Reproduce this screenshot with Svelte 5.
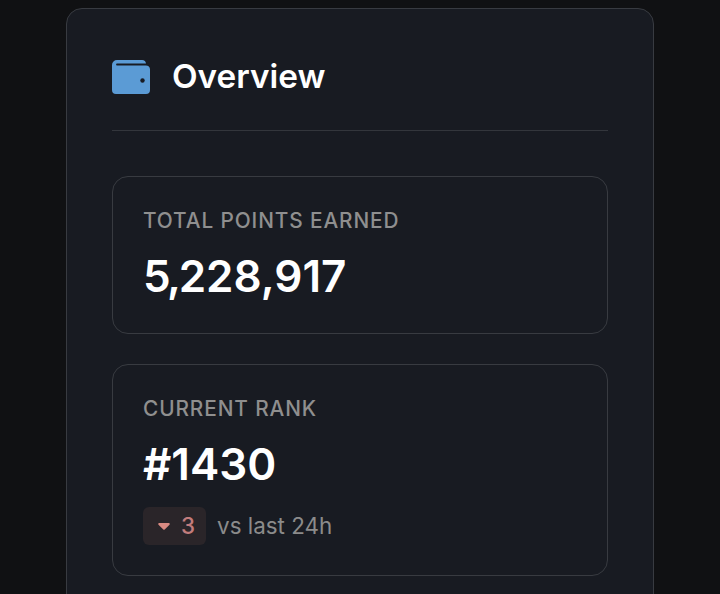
<script lang="ts">
  const stats = [
    { label: "Total points earned", lead: "5,", value: "228,917" },
    { label: "Current rank", value: "#1430", change: 3, note: "vs last 24h" },
  ];
</script>

<main class="page">
  <section class="panel">
    <header class="panel-header">
      <svg class="wallet" viewBox="0 0 38 34" aria-hidden="true">
        <path
          fill="#5b9bd5"
          d="M5 0H30A4 4 0 0 1 34 3.5V3.6H5A.9 .9 0 0 0 5 5.4H34A4 4 0 0 1 38 9.5V30A4 4 0 0 1 34 34H4A4 4 0 0 1 0 30V5A5 5 0 0 1 5 0Z"
        />
        <circle cx="30.5" cy="20.5" r="2.2" fill="#181b23" />
      </svg>
      <h1>Overview</h1>
    </header>

    <div class="stats">
      {#each stats as stat}
        <div class="stat">
          <div class="stat-label">{stat.label}</div>
          <div class="stat-value">{#if stat.lead}<span class="lead">{stat.lead}</span>{/if}{stat.value}</div>
          {#if stat.change}
            <div class="stat-meta">
              <span class="badge">
                <svg class="caret" viewBox="0 0 12 7" aria-hidden="true">
                  <path d="M1.2 0H10.8A1 1 0 0 1 11.5 1.7L6.7 6.5A1 1 0 0 1 5.3 6.5L.5 1.7A1 1 0 0 1 1.2 0Z" />
                </svg>
                <span class="change">{stat.change}</span>
              </span>
              <span class="note">{stat.note}</span>
            </div>
          {/if}
        </div>
      {/each}
    </div>
  </section>
</main>

<style>
  :global(body) {
    background: #101113;
    font-family: Inter, "Liberation Sans", sans-serif;
    overflow: hidden;
  }

  .page {
    display: flex;
    justify-content: center;
    padding-top: 8px;
  }

  .panel {
    width: 588px;
    box-sizing: border-box;
    padding: 49px 45px 45px;
    background: #181b22;
    border: 1px solid #383b41;
    border-radius: 16px;
  }

  .panel-header {
    display: flex;
    align-items: center;
    gap: 22px;
    padding-bottom: 34px;
    border-bottom: 1px solid #33363c;
  }

  .wallet {
    width: 38px;
    height: 34px;
    flex: none;
  }

  h1 {
    margin: 0;
    padding-bottom: 2px;
    font-size: 33.3px;
    line-height: 36px;
    font-weight: 600;
    color: #fff;
  }

  .stats {
    display: flex;
    flex-direction: column;
    gap: 30px;
    margin-top: 45px;
  }

  .stat {
    padding: 30px;
    border: 1px solid #383b41;
    border-radius: 16px;
  }

  .stat-label {
    font-size: 20.8px;
    line-height: 28px;
    font-weight: 500;
    letter-spacing: 0.9px;
    text-transform: uppercase;
    color: #8f8f8f;
  }

  .stat-value {
    margin-top: 14px;
    font-size: 44px;
    line-height: 54px;
    font-weight: 600;
    color: #fff;
  }

  .lead {
    letter-spacing: -2.5px;
  }

  .stat-meta {
    display: flex;
    align-items: center;
    gap: 11px;
    margin-top: 16px;
  }

  .badge {
    display: flex;
    align-items: center;
    gap: 11px;
    height: 38px;
    padding: 0 11px 0 15px;
    border-radius: 6px;
    background: #2a2529;
  }

  .change {
    padding-bottom: 2px;
    font-size: 22.4px;
    font-weight: 500;
    color: #c27c7c;
  }

  .caret {
    width: 12px;
    height: 7px;
    fill: #d98a82;
  }

  .note {
    padding-bottom: 2px;
    font-size: 22.4px;
    color: #8b8b8b;
  }
</style>
